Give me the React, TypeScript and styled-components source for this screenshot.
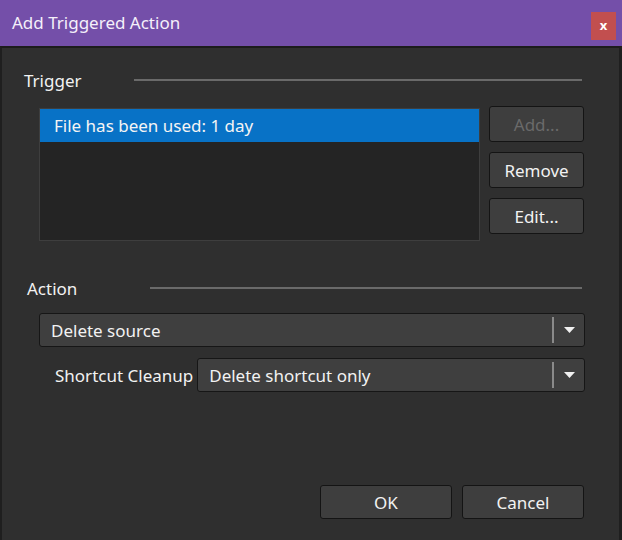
import React from "react";
import styled, { createGlobalStyle } from "styled-components";

const GlobalStyle = createGlobalStyle`
  html, body {
    margin: 0;
    padding: 0;
    background: #2f2f2f;
  }
  * {
    box-sizing: border-box;
  }
`;

const Window = styled.div`
  width: 622px;
  height: 540px;
  display: flex;
  flex-direction: column;
  font-family: "Noto Sans", "Open Sans", sans-serif;
  color: #f2f2f2;
  overflow: hidden;
`;

const TitleBar = styled.div`
  height: 46px;
  flex-shrink: 0;
  background: #744fa9;
  display: flex;
  align-items: flex-start;
  justify-content: space-between;
  padding: 0 6px 0 12px;
`;

const TitleText = styled.div`
  font-size: 17px;
  line-height: 46px;
  color: #f4f0fa;
`;

const CloseButton = styled.div`
  width: 25px;
  height: 28px;
  margin-top: 12px;
  background: #c24f4f;
  color: #fff;
  font-weight: bold;
  font-size: 13px;
  display: flex;
  align-items: center;
  justify-content: center;
  padding-bottom: 2px;
`;

const Body = styled.div`
  flex: 1;
  display: flex;
  flex-direction: column;
  background: #2f2f2f;
  border-top: 2px solid #1c1c1c;
  border-left: 2px solid #1f1f1f;
  border-right: 3px solid #1f1f1f;
  padding-bottom: 21px;
`;

const GroupHeader = styled.div<{ $top: number; $left: number; $labelWidth: number }>`
  display: flex;
  align-items: center;
  height: 20px;
  margin: ${({ $top }) => $top}px 37px 0 ${({ $left }) => $left}px;

  span {
    width: ${({ $labelWidth }) => $labelWidth}px;
    font-size: 17px;
  }
`;

const Rule = styled.div`
  flex: 1;
  height: 2px;
  background: #6a6a6a;
`;

const TriggerRow = styled.div`
  display: flex;
  gap: 9px;
  margin: 16px 35px 0 37px;
`;

const ListBox = styled.div`
  flex: 1;
  height: 133px;
  margin-top: 2px;
  background: #242424;
  border: 1px solid #3e3e3e;
  display: flex;
  flex-direction: column;
`;

const ListItem = styled.div<{ $selected?: boolean }>`
  height: 33px;
  padding-left: 14px;
  display: flex;
  align-items: center;
  font-size: 17px;
  background: ${({ $selected }) => ($selected ? "#0872c6" : "transparent")};
  color: #f4f4f4;
`;

const ButtonColumn = styled.div`
  display: flex;
  flex-direction: column;
  gap: 10px;
`;

const Button = styled.div<{ $width: number; $height?: number; $disabled?: boolean }>`
  width: ${({ $width }) => $width}px;
  height: ${({ $height }) => $height ?? 36}px;
  background: #3e3e3e;
  border: 1px solid #141414;
  border-radius: 3px;
  display: flex;
  align-items: center;
  justify-content: center;
  font-size: 17px;
  color: ${({ $disabled }) => ($disabled ? "#6a6a6a" : "#f2f2f2")};
`;

const Combo = styled.div`
  flex: 1;
  height: 34px;
  background: #3f3f3f;
  border: 1px solid #161616;
  border-radius: 3px;
  display: flex;
  align-items: stretch;
`;

const ComboValue = styled.div`
  flex: 1;
  display: flex;
  align-items: center;
  padding-left: 11px;
  font-size: 17px;
`;

const ComboArrow = styled.div`
  width: 32px;
  display: flex;
  align-items: center;
  justify-content: center;
  border-left: 2px solid #8a8a8a;
  margin: 3px 0;
`;

const ActionRow = styled.div`
  display: flex;
  margin: 15px 34px 0 37px;
`;

const ShortcutRow = styled.div`
  display: flex;
  align-items: center;
  gap: 4px;
  margin: 11px 34px 0 53px;

  label {
    font-size: 17px;
  }
`;

const Footer = styled.div`
  margin-top: auto;
  display: flex;
  justify-content: flex-end;
  gap: 10px;
  padding-right: 35px;
`;

const Arrow = () => (
  <svg width="11" height="6" viewBox="0 0 11 6">
    <path d="M0 0 L11 0 L5.5 6 Z" fill="#f0f0f0" />
  </svg>
);

const Dropdown: React.FC<{ value: string }> = ({ value }) => (
  <Combo>
    <ComboValue>{value}</ComboValue>
    <ComboArrow>
      <Arrow />
    </ComboArrow>
  </Combo>
);

export default function App() {
  return (
    <Window>
      <GlobalStyle />
      <TitleBar>
        <TitleText>Add Triggered Action</TitleText>
        <CloseButton>x</CloseButton>
      </TitleBar>
      <Body>
        <GroupHeader $top={22} $left={22} $labelWidth={110}>
          <span>Trigger</span>
          <Rule />
        </GroupHeader>
        <TriggerRow>
          <ListBox>
            <ListItem $selected>File has been used: 1 day</ListItem>
          </ListBox>
          <ButtonColumn>
            <Button $width={95} $disabled>
              Add...
            </Button>
            <Button $width={95}>Remove</Button>
            <Button $width={95}>Edit...</Button>
          </ButtonColumn>
        </TriggerRow>
        <GroupHeader $top={37} $left={25} $labelWidth={123}>
          <span>Action</span>
          <Rule />
        </GroupHeader>
        <ActionRow>
          <Dropdown value="Delete source" />
        </ActionRow>
        <ShortcutRow>
          <label>Shortcut Cleanup</label>
          <Dropdown value="Delete shortcut only" />
        </ShortcutRow>
        <Footer>
          <Button $width={132} $height={34}>
            OK
          </Button>
          <Button $width={122} $height={34}>
            Cancel
          </Button>
        </Footer>
      </Body>
    </Window>
  );
}
